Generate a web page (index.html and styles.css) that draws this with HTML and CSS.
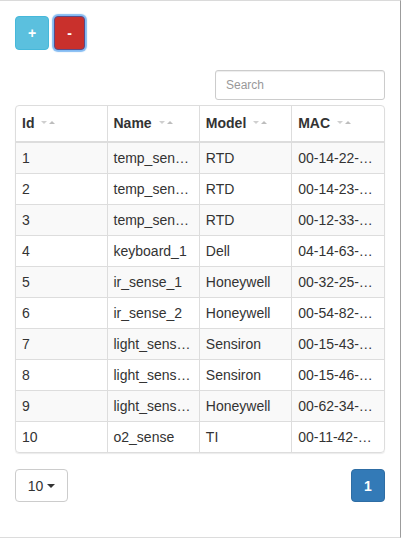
FILE: index.html
```html
<!DOCTYPE html>
<html>
<head>
<meta charset="utf-8">
<link rel="stylesheet" href="styles.css">
</head>
<body>
<div class="frame">
  <div class="toolbar">
    <button class="btn btn-info">+</button>
    <button class="btn btn-danger">-</button>
  </div>
  <div class="search-row">
    <input class="search" type="text" placeholder="Search">
  </div>
  <div class="table-wrap">
    <table class="grid">
      <colgroup><col class="c1"><col><col><col></colgroup>
      <thead>
        <tr>
          <th>Id<svg class="sort" width="15" height="6" viewBox="0 0 15 6"><polygon points="0,1 6,1 3,4" fill="#cfcfcf"/><polygon points="8,4 14,4 11,1" fill="#bdbdbd"/></svg></th>
          <th>Name<svg class="sort" width="15" height="6" viewBox="0 0 15 6"><polygon points="0,1 6,1 3,4" fill="#cfcfcf"/><polygon points="8,4 14,4 11,1" fill="#bdbdbd"/></svg></th>
          <th>Model<svg class="sort" width="15" height="6" viewBox="0 0 15 6"><polygon points="0,1 6,1 3,4" fill="#cfcfcf"/><polygon points="8,4 14,4 11,1" fill="#bdbdbd"/></svg></th>
          <th>MAC<svg class="sort" width="15" height="6" viewBox="0 0 15 6"><polygon points="0,1 6,1 3,4" fill="#cfcfcf"/><polygon points="8,4 14,4 11,1" fill="#bdbdbd"/></svg></th>
        </tr>
      </thead>
      <tbody>
        <tr><td>1</td><td>temp_sensor_1</td><td>RTD</td><td>00-14-22-01-23-45</td></tr>
        <tr><td>2</td><td>temp_sensor_2</td><td>RTD</td><td>00-14-23-01-23-46</td></tr>
        <tr><td>3</td><td>temp_sensor_3</td><td>RTD</td><td>00-12-33-01-23-47</td></tr>
        <tr><td>4</td><td>keyboard_1</td><td>Dell</td><td>04-14-63-11-22-33</td></tr>
        <tr><td>5</td><td>ir_sense_1</td><td>Honeywell</td><td>00-32-25-12-34-56</td></tr>
        <tr><td>6</td><td>ir_sense_2</td><td>Honeywell</td><td>00-54-82-12-34-57</td></tr>
        <tr><td>7</td><td>light_sensor_1</td><td>Sensiron</td><td>00-15-43-22-11-44</td></tr>
        <tr><td>8</td><td>light_sensor_2</td><td>Sensiron</td><td>00-15-46-22-11-45</td></tr>
        <tr><td>9</td><td>light_sensor_3</td><td>Honeywell</td><td>00-62-34-22-11-46</td></tr>
        <tr><td>10</td><td>o2_sense</td><td>TI</td><td>00-11-42-33-44-55</td></tr>
      </tbody>
    </table>
  </div>
  <div class="pager">
    <button class="btn btn-default">10 <span class="caret"></span></button>
    <button class="btn btn-primary">1</button>
  </div>
</div>
</body>
</html>
```

FILE: styles.css
```css
* { box-sizing: border-box; }
html, body { margin: 0; padding: 0; background: #fff; }
body {
  font-family: "Liberation Sans", Arial, Helvetica, sans-serif;
  font-size: 14px;
  color: #333;
  width: 401px;
  height: 541px;
}
.frame {
  width: 401px;
  height: 538px;
  border-top: 1px solid #dadada;
  border-right: 1px solid #9c9c9c;
  border-bottom: 1px solid #dcdcdc;
  padding: 15px 15px 0 15px;
}
.toolbar {
  display: flex;
  gap: 5px;
  height: 34px;
}
.btn {
  font-family: "Liberation Sans", Arial, Helvetica, sans-serif;
  font-size: 14px;
  line-height: 20px;
  border: 1px solid transparent;
  border-radius: 4px;
  padding: 0 12px;
  margin: 0;
  cursor: pointer;
}
.btn-info {
  background: #5bc0de;
  border-color: #46b8da;
  color: #fff;
  font-weight: bold;
  height: 34px;
  width: 34px;
  padding: 0;
}
.btn-danger {
  background: #c9302c;
  border-color: #5b4a86;
  color: #fff;
  font-weight: bold;
  height: 34px;
  width: 31px;
  padding: 0;
  box-shadow: 0 0 1px 2px rgba(110, 175, 240, 0.85);
}
.search-row {
  display: flex;
  justify-content: flex-end;
  margin-top: 20px;
}
.search {
  width: 170px;
  height: 30px;
  border: 1px solid #ccc;
  border-radius: 3px;
  padding: 5px 10px;
  font-family: "Liberation Sans", Arial, Helvetica, sans-serif;
  font-size: 12px;
  color: #555;
  box-shadow: inset 0 1px 1px rgba(0,0,0,.075);
  outline: none;
}
.search::placeholder { color: #999; }
.table-wrap {
  margin-top: 5px;
  border: 1px solid #ddd;
  border-radius: 4px;
  overflow: hidden;
  box-shadow: 0 1px 1px rgba(0,0,0,.08);
}
.grid {
  width: 100%;
  border-collapse: collapse;
  table-layout: fixed;
}
.grid col.c1 { width: 91px; }
.grid th, .grid td {
  text-align: left;
  white-space: nowrap;
  overflow: hidden;
  text-overflow: ellipsis;
  border-left: 1px solid #ddd;
}
.grid th:first-child, .grid td:first-child { border-left: none; }
.grid th {
  font-weight: bold;
  padding: 5px 5px 5px 6px;
  line-height: 25px;
  border-bottom: 2px solid #ddd;
}
.grid td {
  padding: 5px 7px 5px 6px;
  line-height: 20px;
  border-top: 1px solid #ddd;
}
.grid tbody tr:first-child td { border-top: none; }
.grid tbody tr:nth-child(odd) td { background: #f9f9f9; }
.sort {
  margin-left: 7px;
  vertical-align: middle;
  position: relative;
  top: -1px;
}
.pager {
  display: flex;
  justify-content: space-between;
  margin-top: 16px;
}
.btn-default {
  background: #fff;
  border-color: #ccc;
  color: #333;
  height: 33px;
  width: 53px;
  padding: 0 12px;
  display: flex;
  align-items: center;
  justify-content: center;
  gap: 4px;
}
.caret {
  display: inline-block;
  width: 0;
  height: 0;
  border-top: 4px solid #333;
  border-left: 4px solid transparent;
  border-right: 4px solid transparent;
}
.btn-primary {
  background: #337ab7;
  border-color: #2e6da4;
  color: #fff;
  font-weight: bold;
  height: 33px;
  width: 34px;
  padding: 0;
}
```
